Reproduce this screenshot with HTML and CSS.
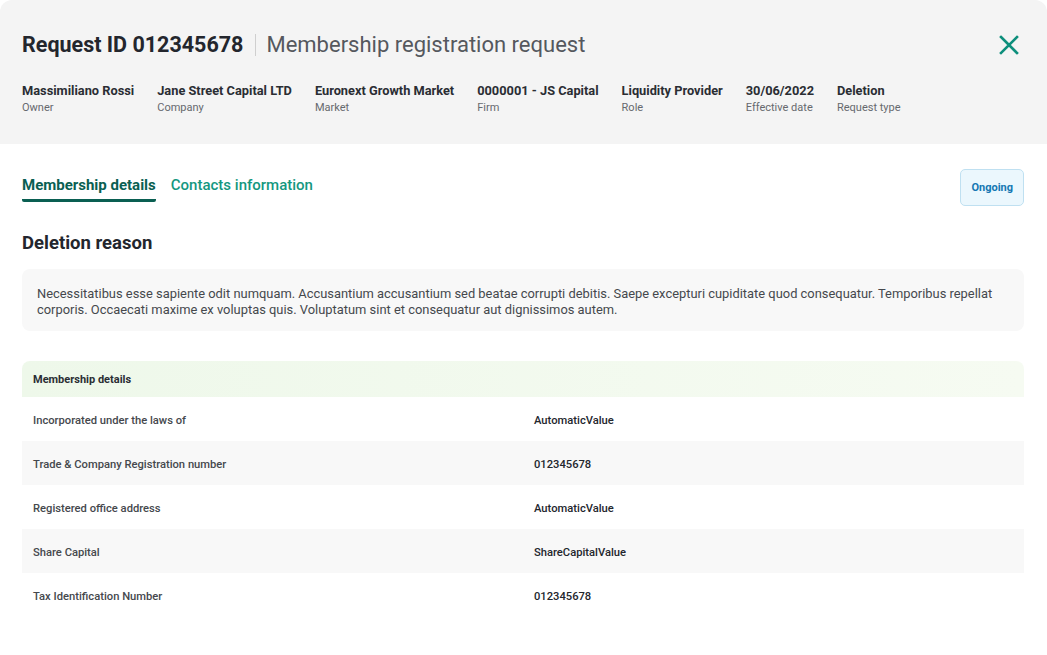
FILE: index.html
```html
<!DOCTYPE html>
<html lang="en">
<head>
    <meta charset="UTF-8">
    <title>Membership registration request</title>
    <link rel="stylesheet" href="styles.css">
</head>
<body>
    <div class="modal">
        <div class="header">
            <div class="title-row">
                <h1 class="title"><strong>Request ID 012345678</strong><span class="divider"></span><span class="subtitle">Membership registration request</span></h1>
                <button class="close-btn" aria-label="Close">
                    <svg width="20" height="20" viewBox="0 0 20 20"><path d="M2 2 L18 18 M18 2 L2 18" stroke="#0e8f7c" stroke-width="2.6" stroke-linecap="square" fill="none"/></svg>
                </button>
            </div>
            <div class="meta">
                <div class="meta-item"><div class="meta-value">Massimiliano Rossi</div><div class="meta-label">Owner</div></div>
                <div class="meta-item"><div class="meta-value">Jane Street Capital LTD</div><div class="meta-label">Company</div></div>
                <div class="meta-item"><div class="meta-value">Euronext Growth Market</div><div class="meta-label">Market</div></div>
                <div class="meta-item"><div class="meta-value">0000001 - JS Capital</div><div class="meta-label">Firm</div></div>
                <div class="meta-item"><div class="meta-value">Liquidity Provider</div><div class="meta-label">Role</div></div>
                <div class="meta-item"><div class="meta-value">30/06/2022</div><div class="meta-label">Effective date</div></div>
                <div class="meta-item"><div class="meta-value">Deletion</div><div class="meta-label">Request type</div></div>
            </div>
        </div>

        <div class="content">
            <div class="tabs-row">
                <div class="tabs">
                    <a href="#" class="tab active">Membership details</a>
                    <a href="#" class="tab">Contacts information</a>
                </div>
                <span class="badge">Ongoing</span>
            </div>

            <h2 class="section-title">Deletion reason</h2>
            <div class="reason">
                Necessitatibus esse sapiente odit numquam. Accusantium accusantium sed beatae corrupti debitis. Saepe excepturi cupiditate quod consequatur. Temporibus repellat corporis. Occaecati maxime ex voluptas quis. Voluptatum sint et consequatur aut dignissimos autem.
            </div>

            <div class="details">
                <div class="details-head">Membership details</div>
                <div class="details-row"><span class="label">Incorporated under the laws of</span><span class="value">AutomaticValue</span></div>
                <div class="details-row"><span class="label">Trade &amp; Company Registration number</span><span class="value">012345678</span></div>
                <div class="details-row"><span class="label">Registered office address</span><span class="value">AutomaticValue</span></div>
                <div class="details-row"><span class="label">Share Capital</span><span class="value">ShareCapitalValue</span></div>
                <div class="details-row"><span class="label">Tax Identification Number</span><span class="value">012345678</span></div>
            </div>
        </div>
    </div>
</body>
</html>
```

FILE: styles.css
```css
body {
    margin: 0;
    padding: 0;
    background-color: #ffffff;
    font-family: Roboto, "Liberation Sans", sans-serif;
    color: #23262d;
}
.modal {
    width: 1047px;
    height: 655px;
    background-color: #ffffff;
    border-radius: 12px;
    overflow: hidden;
}
.header {
    background-color: #f4f4f4;
    height: 144px;
    box-sizing: border-box;
    padding: 31px 23px 0 22px;
}
.title-row {
    display: flex;
    align-items: center;
    justify-content: space-between;
}
.title {
    margin: 0;
    display: flex;
    align-items: center;
    font-size: 22px;
    font-weight: 400;
    line-height: 28px;
}
.title strong {
    font-weight: 700;
    font-size: 21.5px;
    color: #23262d;
}
.divider {
    display: inline-block;
    width: 1px;
    height: 22px;
    background-color: #cfcfcf;
    margin: 0 10px 0 12px;
}
.subtitle {
    color: #55585e;
}
.close-btn {
    background: none;
    border: none;
    padding: 0;
    margin-right: 5px;
    cursor: pointer;
    display: flex;
}
.meta {
    display: flex;
    gap: 23px;
    margin-top: 24px;
}
.meta-value {
    font-size: 12.8px;
    font-weight: 700;
    color: #2a2d33;
    line-height: 16px;
}
.meta-label {
    font-size: 11px;
    color: #66696e;
    margin-top: 2px;
}
.content {
    padding: 0 23px 0 22px;
}
.tabs-row {
    display: flex;
    justify-content: space-between;
    align-items: flex-start;
    padding-top: 25px;
}
.tabs {
    display: flex;
    gap: 15px;
    padding-top: 7px;
}
.tab {
    font-size: 15px;
    font-weight: 500;
    color: #14977f;
    text-decoration: none;
    padding-bottom: 5px;
    border-bottom: 3px solid transparent;
}
.tab.active {
    color: #0a5f52;
    font-weight: 700;
    border-bottom-color: #0a5f52;
    border-radius: 0 0 2px 2px;
}
.badge {
    display: inline-block;
    background-color: #ebf7fd;
    border: 1px solid #bfe0f1;
    border-radius: 5px;
    color: #1577b3;
    font-size: 11px;
    font-weight: 700;
    padding: 11px 10px;
}
.section-title {
    margin: 26px 0 15px;
    font-size: 18.5px;
    line-height: 22px;
    font-weight: 700;
    color: #23262d;
}
.reason {
    background-color: #f8f8f8;
    border-radius: 8px;
    padding: 17px 15px 13px;
    font-size: 12.9px;
    line-height: 16px;
    color: #45484d;
}
.details {
    margin-top: 30px;
}
.details-head {
    height: 36px;
    display: flex;
    align-items: center;
    padding-left: 11px;
    background: linear-gradient(90deg, #eef8ea 0%, #f6fbf2 100%);
    border-radius: 8px 8px 0 0;
    font-size: 11px;
    font-weight: 700;
    color: #2a2d33;
}
.details-row {
    height: 44px;
    display: flex;
    align-items: center;
    padding-left: 11px;
    font-size: 11.2px;
    font-weight: 500;
    padding-top: 2px;
    box-sizing: border-box;
}
.details-row:nth-child(odd) {
    background-color: #f8f8f8;
}
.label {
    width: 501px;
    color: #45484d;
}
.value {
    color: #23262d;
}
```
